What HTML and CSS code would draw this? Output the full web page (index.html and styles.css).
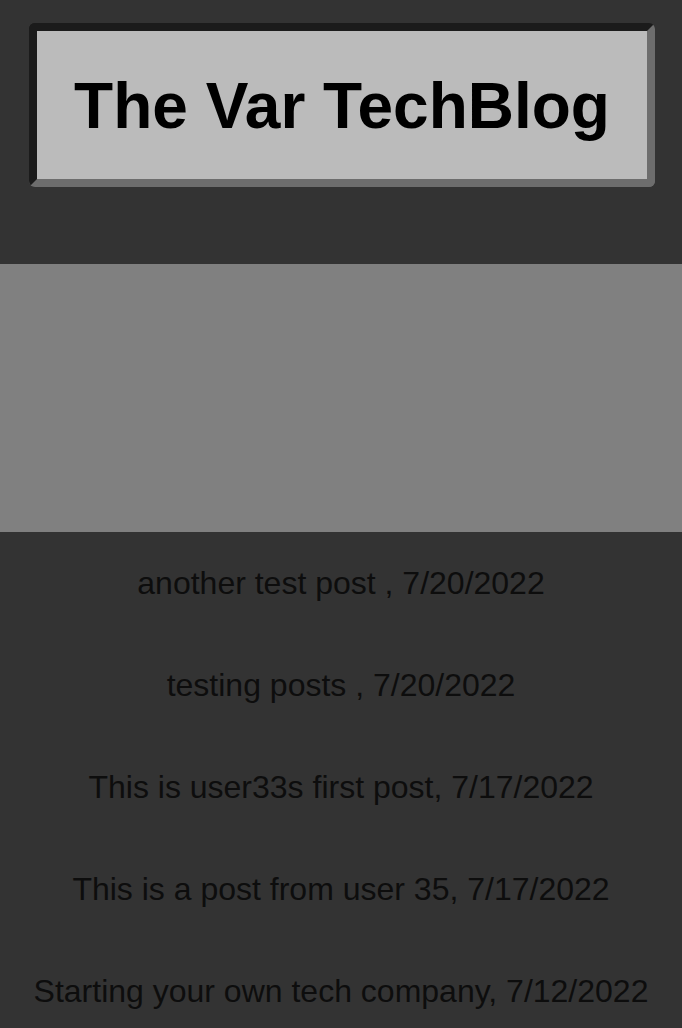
FILE: index.html
```html
<!DOCTYPE html>
<html lang="en">
<head>
<meta charset="utf-8">
<title>The Var TechBlog</title>
<link rel="stylesheet" href="styles.css">
</head>
<body>
<header class="site-header">
  <h1 class="site-title">The Var TechBlog</h1>
</header>
<section class="banner"></section>
<main class="posts">
  <p class="post">another test post , 7/20/2022</p>
  <p class="post">testing posts , 7/20/2022</p>
  <p class="post">This is user33s first post, 7/17/2022</p>
  <p class="post">This is a post from user 35, 7/17/2022</p>
  <p class="post">Starting your own tech company, 7/12/2022</p>
</main>
</body>
</html>
```

FILE: styles.css
```css
html, body {
  margin: 0;
  padding: 0;
}

body {
  background: #333333;
  font-family: "Liberation Sans", Arial, Helvetica, sans-serif;
  color: #0d0d0d;
}

.site-header {
  margin: 23px 27px 0 29px;
  background: #bbbbbb;
  border-style: solid;
  border-width: 8px;
  border-color: #1b1b1b #6d6d6d #6d6d6d #1b1b1b;
  border-radius: 6px;
  text-align: center;
}

.site-title {
  margin: 0;
  padding: 38px 0 36px;
  font-size: 64px;
  font-weight: bold;
  color: #000;
  line-height: normal;
}

.banner {
  margin-top: 77px;
  height: 268px;
  background: #808080;
}

.posts {
  text-align: center;
}

.post {
  margin: 0;
  font-size: 32px;
  line-height: 102px;
}
```
